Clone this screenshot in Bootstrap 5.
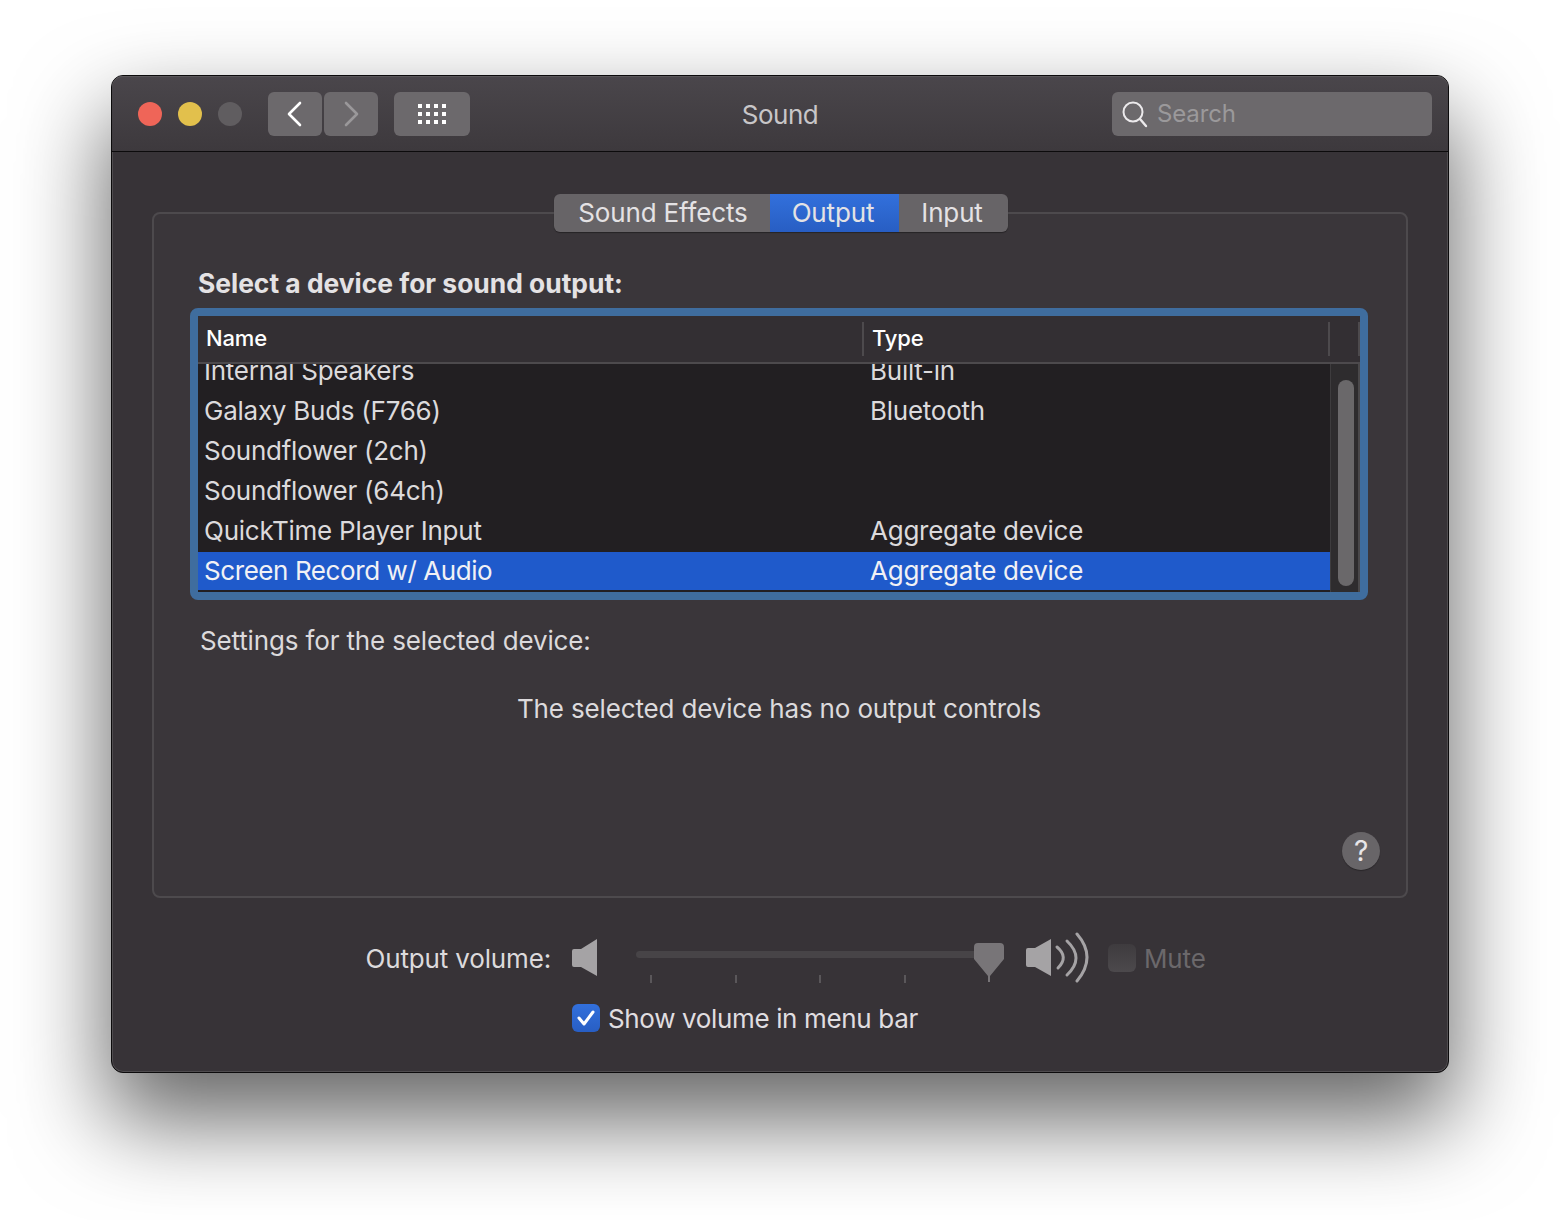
<!DOCTYPE html>
<html lang="en">
<head>
  <meta charset="UTF-8">
  <title>Sound</title>
  <link href="https://cdn.jsdelivr.net/npm/bootstrap@5.3.0/dist/css/bootstrap.min.css" rel="stylesheet">
  <style>
    body { background: #fff; font-family: Inter, "Noto Sans", sans-serif; font-size: 26px; letter-spacing: -.15px; color: #dedcde; height: 1220px; padding-top: 75px; }
    .mac-window { width: 1338px; height: 998px; margin: 0 0 0 111px; background: #373337; border: 1px solid #0c0b0c; border-radius: 12px; box-shadow: inset 0 0 0 1px #4f4c4f, 0 44px 90px 4px rgba(0,0,0,.6); position: relative; }
    .mac-titlebar { height: 76px; padding: 16px 16px 0 26px; background: linear-gradient(#4a464b, #3d393d); border-bottom: 1px solid #0c0b0c; border-radius: 11px 11px 0 0; box-shadow: inset 0 1px 0 #5a575a; }
    .light { width: 24px; height: 24px; border-radius: 50%; margin-top: 10px; margin-right: 16px; }
    .tool-btn { height: 44px; border-radius: 6px; background: #6c696c; }
    .tool-btn svg { display: block; }
    .title-text { width: 620px; height: 44px; line-height: 46px; text-align: center; color: #c8c6c8; letter-spacing: -.5px; }
    .search-box { width: 320px; height: 44px; margin-left: auto; padding-left: 10px; border-radius: 6px; background: #6c696c; color: #9b999b; font-size: 24px; line-height: 46px; }
    .search-word { margin-left: 1px; }
    .mac-content { padding: 60px 40px 0; }
    .mac-panel { height: 686px; border: 2px solid #4d4a4d; border-radius: 8px; background: #3a363a; padding: 0 38px 0 36px; }
    .seg-wrap { margin-top: -20px; height: 38px; padding-left: 4px; }
    .seg { border-radius: 6px; background: #676467; overflow: hidden; box-shadow: 0 1px 1px rgba(0,0,0,.35); }
    .seg-item { height: 38px; line-height: 37px; color: #e4e2e4; }
    .seg-item.on { background: linear-gradient(#3270dc, #285ec3); padding: 0 25px 0 22px; }
    .device-heading { font-weight: 700; color: #e4e2e4; margin: 34px 0 0 8px; line-height: 34px; height: 32px; font-size: 26.4px; letter-spacing: 0; }
    .device-ring { margin-top: 10px; height: 292px; border: 8px solid #3f6d9e; border-radius: 8px; background: #2d292d; }
    .device-head { height: 48px; padding-left: 8px; border-bottom: 2px solid #4d4a4d; background: #332f33; color: #fff; font-size: 22px; font-weight: 500; line-height: 44px; position: relative; }
    .head-col { width: 666px; }
    .head-sep { position: absolute; top: 6px; width: 2px; height: 34px; background: #4d4a4d; }
    .device-main { height: 228px; }
    .device-rows { width: 1132px; height: 228px; background: #221f22; overflow: hidden; }
    .device-row { height: 40px; line-height: 40px; padding-left: 6px; color: #dcdadc; white-space: nowrap; letter-spacing: -.25px; }
    .device-row:first-child { margin-top: -13px; }
    .device-row.picked { background: #1f5acb; color: #f1f1f5; height: 38px; margin-top: 1px; line-height: 38px; }
    .device-name { width: 666px; }
    .picked .device-name { letter-spacing: -.42px; }
    .scroll-track { width: 30px; height: 228px; background: #2e2c2e; border-left: 1px solid #3e3c3e; border-right: 2px solid #4a484a; padding: 16px 0 0 7px; }
    .scroll-thumb { width: 16px; height: 206px; border-radius: 8px; background: #6a686a; }
    .settings-label { margin: 21px 0 0 10px; line-height: 40px; color: #dcdadc; }
    .no-controls { margin-top: 28px; line-height: 40px; text-align: center; color: #dcdadc; }
    .help-btn { width: 38px; height: 38px; border-radius: 50%; background: #686568; color: #e8e6e8; font-size: 28px; line-height: 38px; text-align: center; margin: 103px -12px 0 auto; box-shadow: 0 1px 1px rgba(0,0,0,.3); }
    .volume-row { margin-top: 38px; height: 48px; }
    .volume-label { width: 399px; text-align: right; line-height: 46px; color: #dcdadc; }
    .vol-low { margin: 3px 0 0 21px; }
    .slider-box { width: 372px; height: 48px; position: relative; margin-left: 38px; }
    .slider-line { position: absolute; left: 0; top: 15px; width: 354px; height: 7px; border-radius: 4px; background: #474447; }
    .slider-tick { position: absolute; top: 39px; width: 2px; height: 8px; background: #5a575a; }
    .vol-high { margin: -6px 0 0 18px; }
    .mute-box { width: 28px; height: 28px; border-radius: 6px; background: linear-gradient(#3e3b3e, #4c494c); margin: 8px 0 0 18px; }
    .mute-text { color: #6b686b; line-height: 46px; margin-left: 8px; }
    .menu-row { margin-top: 14px; height: 40px; padding-left: 420px; line-height: 40px; color: #e0dee0; letter-spacing: -.35px; }
    .menu-word { padding-top: 2px; }
    .check-box { width: 28px; height: 28px; border-radius: 6px; background: linear-gradient(#3270dc, #285ec3); margin-right: 8px; }
  </style>
</head>
<body>
  <div class="mac-window">
    <div class="mac-titlebar d-flex">
      <div class="light" style="background:#ef6558"></div>
      <div class="light" style="background:#e2c04c"></div>
      <div class="light" style="background:#605d60;margin-right:26px"></div>
      <div class="tool-btn d-flex justify-content-center align-items-center" style="width:54px;margin-right:2px">
        <svg width="20" height="28" viewBox="0 0 20 28"><path d="M15 3 L4 14 L15 25" fill="none" stroke="#fff" stroke-width="2.6" stroke-linecap="round" stroke-linejoin="round"/></svg>
      </div>
      <div class="tool-btn d-flex justify-content-center align-items-center" style="width:54px;margin-right:16px">
        <svg width="20" height="28" viewBox="0 0 20 28"><path d="M5 3 L16 14 L5 25" fill="none" stroke="#9a989a" stroke-width="2.6" stroke-linecap="round" stroke-linejoin="round"/></svg>
      </div>
      <div class="tool-btn d-flex justify-content-center align-items-center" style="width:76px">
        <svg width="28" height="20" viewBox="0 0 28 20" fill="#fff">
          <rect x="0" y="0" width="4" height="4"/><rect x="8" y="0" width="4" height="4"/><rect x="16" y="0" width="4" height="4"/><rect x="24" y="0" width="4" height="4"/>
          <rect x="0" y="8" width="4" height="4"/><rect x="8" y="8" width="4" height="4"/><rect x="16" y="8" width="4" height="4"/><rect x="24" y="8" width="4" height="4"/>
          <rect x="0" y="16" width="4" height="4"/><rect x="8" y="16" width="4" height="4"/><rect x="16" y="16" width="4" height="4"/><rect x="24" y="16" width="4" height="4"/>
        </svg>
      </div>
      <div class="title-text">Sound</div>
      <div class="search-box d-flex align-items-center gap-2">
        <svg width="26" height="28" viewBox="0 0 26 28" fill="none" stroke="#eceaec" class="flex-shrink-0"><circle cx="11" cy="12" r="9.5" stroke-width="2"/><path d="M18 19 L24 26" stroke-width="2.4" stroke-linecap="round"/></svg>
        <span class="search-word">Search</span>
      </div>
    </div>
    <div class="mac-content">
      <div class="mac-panel">
        <div class="seg-wrap d-flex justify-content-center">
          <div class="seg d-flex">
            <div class="seg-item" style="padding:0 22px 0 24px">Sound Effects</div>
            <div class="seg-item on">Output</div>
            <div class="seg-item" style="padding:0 25px 0 22px">Input</div>
          </div>
        </div>
        <div class="device-heading">Select a device for sound output:</div>
        <div class="device-ring">
          <div class="device-head d-flex">
            <div class="head-col">Name</div>
            <div>Type</div>
            <div class="head-sep" style="left:664px"></div>
            <div class="head-sep" style="left:1130px"></div>
            <div class="head-sep" style="left:1160px"></div>
          </div>
          <div class="device-main d-flex">
            <div class="device-rows">
              <div class="device-row d-flex"><div class="device-name">Internal Speakers</div><div>Built-in</div></div>
              <div class="device-row d-flex"><div class="device-name">Galaxy Buds (F766)</div><div>Bluetooth</div></div>
              <div class="device-row d-flex"><div class="device-name">Soundflower (2ch)</div></div>
              <div class="device-row d-flex"><div class="device-name">Soundflower (64ch)</div></div>
              <div class="device-row d-flex"><div class="device-name">QuickTime Player Input</div><div>Aggregate device</div></div>
              <div class="device-row picked d-flex"><div class="device-name">Screen Record w/ Audio</div><div>Aggregate device</div></div>
            </div>
            <div class="scroll-track"><div class="scroll-thumb"></div></div>
          </div>
        </div>
        <div class="settings-label">Settings for the selected device:</div>
        <div class="no-controls">The selected device has no output controls</div>
        <div class="help-btn">?</div>
      </div>
      <div class="volume-row d-flex">
        <div class="volume-label">Output volume:</div>
        <svg class="vol-low" width="26" height="38" viewBox="0 0 26 38"><path d="M2 10 H9 L25 0 V37 L9 28 H2 Q0 28 0 26 V12 Q0 10 2 10 Z" fill="#a5a3a5"/></svg>
        <div class="slider-box">
          <div class="slider-line"></div>
          <div class="slider-tick" style="left:14px"></div>
          <div class="slider-tick" style="left:99px"></div>
          <div class="slider-tick" style="left:183px"></div>
          <div class="slider-tick" style="left:268px"></div>
          <svg class="position-absolute" style="left:338px;top:7px" width="30" height="39" viewBox="0 0 30 39"><path d="M4 0 H26 Q30 0 30 4 V16 L16 33 V39 H14 V33 L0 16 V4 Q0 0 4 0 Z" fill="#787578"/></svg>
        </div>
        <svg class="vol-high" width="64" height="54" viewBox="0 0 64 54" fill="none" stroke="#a5a3a5" stroke-linecap="round">
          <path d="M2 18 H9 L25 9 V46 L9 37 H2 Q0 37 0 35 V20 Q0 18 2 18 Z" fill="#a5a3a5" stroke="none"/>
          <path d="M31 17 Q43 27 32 38" stroke-width="3"/>
          <path d="M41 11 Q59 28 41 45" stroke-width="3"/>
          <path d="M51 4 Q71 27 51 51" stroke-width="3"/>
        </svg>
        <div class="mute-box"></div>
        <div class="mute-text">Mute</div>
      </div>
      <div class="menu-row d-flex align-items-center">
        <div class="check-box d-flex justify-content-center align-items-center">
          <svg width="20" height="18" viewBox="0 0 20 18"><path d="M3 9 L8 15 L17 3" fill="none" stroke="#fff" stroke-width="3" stroke-linecap="round" stroke-linejoin="round"/></svg>
        </div>
        <div class="menu-word">Show volume in menu bar</div>
      </div>
    </div>
  </div>
</body>
</html>
